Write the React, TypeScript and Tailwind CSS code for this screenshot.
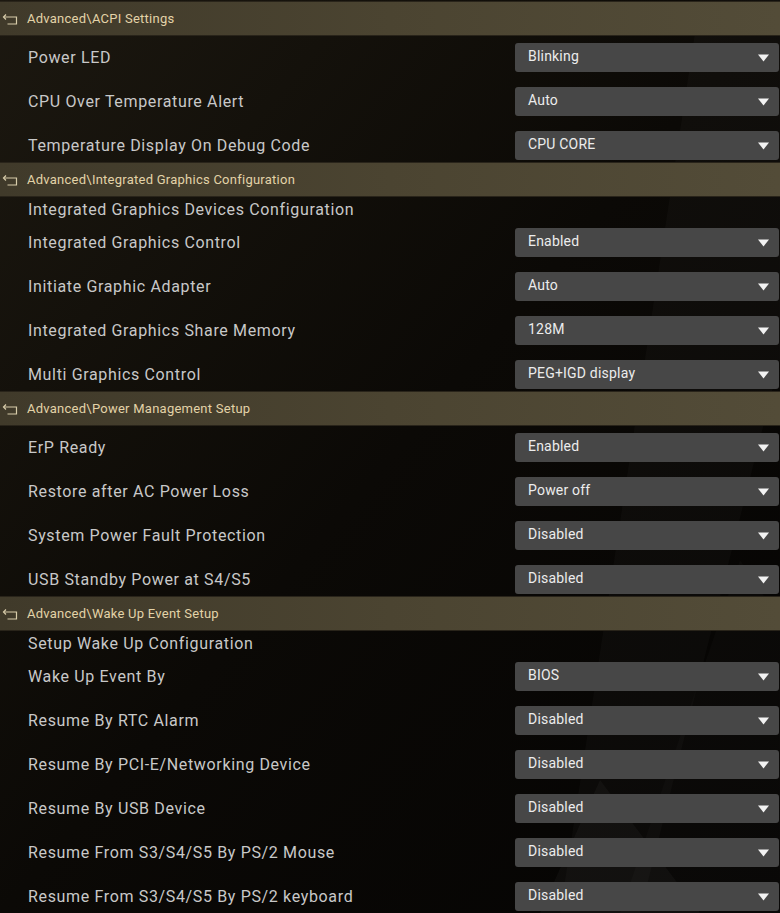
import React from 'react';

type Item = { label: string; value?: string };
type Section = { title: string; items: Item[] };

const sections: Section[] = [
  {
    title: 'Advanced\\ACPI Settings',
    items: [
      { label: 'Power LED', value: 'Blinking' },
      { label: 'CPU Over Temperature Alert', value: 'Auto' },
      { label: 'Temperature Display On Debug Code', value: 'CPU CORE' },
    ],
  },
  {
    title: 'Advanced\\Integrated Graphics Configuration',
    items: [
      { label: 'Integrated Graphics Devices Configuration' },
      { label: 'Integrated Graphics Control', value: 'Enabled' },
      { label: 'Initiate Graphic Adapter', value: 'Auto' },
      { label: 'Integrated Graphics Share Memory', value: '128M' },
      { label: 'Multi Graphics Control', value: 'PEG+IGD display' },
    ],
  },
  {
    title: 'Advanced\\Power Management Setup',
    items: [
      { label: 'ErP Ready', value: 'Enabled' },
      { label: 'Restore after AC Power Loss', value: 'Power off' },
      { label: 'System Power Fault Protection', value: 'Disabled' },
      { label: 'USB Standby Power at S4/S5', value: 'Disabled' },
    ],
  },
  {
    title: 'Advanced\\Wake Up Event Setup',
    items: [
      { label: 'Setup Wake Up Configuration' },
      { label: 'Wake Up Event By', value: 'BIOS' },
      { label: 'Resume By RTC Alarm', value: 'Disabled' },
      { label: 'Resume By PCI-E/Networking Device', value: 'Disabled' },
      { label: 'Resume By USB Device', value: 'Disabled' },
      { label: 'Resume From S3/S4/S5 By PS/2 Mouse', value: 'Disabled' },
      { label: 'Resume From S3/S4/S5 By PS/2 keyboard', value: 'Disabled' },
    ],
  },
];

function BackIcon() {
  return (
    <svg width="18" height="14" viewBox="0 0 18 14" className="shrink-0" fill="none" stroke="#d8ccaa" strokeWidth="1.2">
      <path d="M5 2.5 L2.5 5 L5 7.5" />
      <path d="M2.8 5 H15.5 V12 H6.5" />
    </svg>
  );
}

function Caret() {
  return (
    <svg width="11" height="8" viewBox="0 0 11 8" className="shrink-0">
      <path d="M0 0.5 H11 L5.5 7.5 Z" fill="#f2f2f2" />
    </svg>
  );
}

function SectionHeader({ title }: { title: string }) {
  return (
    <div className="h-[35px] flex items-center gap-[8px] pl-[1px] bg-gradient-to-r from-[#403a2a] via-[#4b4431] to-[#534c38] border-y border-[#29241a]">
      <BackIcon />
      <span className="text-[13px] text-[#e3d3a8] tracking-[0.25px]">{title}</span>
    </div>
  );
}

function Row({ item }: { item: Item }) {
  if (!item.value) {
    return (
      <div className="h-[24px] flex items-center pt-[2px] pl-[28px] text-[16px] text-[#c8c8c8] tracking-[0.65px]">
        {item.label}
      </div>
    );
  }
  return (
    <div className="h-[44px] last:h-[38px] pt-[7px] flex items-start">
      <div className="h-[29px] flex-1 flex items-center pt-[1px] pl-[28px] text-[16px] text-[#c8c8c8] tracking-[0.65px]">
        {item.label}
      </div>
      <div className="w-[264px] h-[29px] mr-[1px] rounded-[3px] bg-[#474747] flex items-center justify-between pl-[13px] pr-[10px]">
        <span className="text-[14px] text-[#ececec] tracking-[0.2px] -mt-[3px]">{item.value}</span>
        <Caret />
      </div>
    </div>
  );
}

export default function App() {
  return (
    <div
      className="relative w-[780px] h-[913px] overflow-hidden bg-gradient-to-br from-[#1c1810] via-[#0b0906] to-[#050403]"
      style={{ fontFamily: 'Roboto, "Noto Sans", sans-serif' }}
    >
      <svg className="absolute inset-0 pointer-events-none" width="780" height="913" viewBox="0 0 780 913">
        <polygon points="700,0 780,0 780,360 640,913 560,913" fill="#ffffff" opacity="0.025" />
        <polygon points="740,560 780,620 780,913 700,913 620,913" fill="#ffffff" opacity="0.02" />
        <polygon points="600,780 700,913 540,913" fill="#ffffff" opacity="0.03" />
      </svg>
      <div className="relative pt-[1px] flex flex-col">
        {sections.map((s) => (
          <div key={s.title} className="flex flex-col">
            <SectionHeader title={s.title} />
            <div className="flex flex-col">
              {s.items.map((it) => (
                <Row key={it.label} item={it} />
              ))}
            </div>
          </div>
        ))}
      </div>
    </div>
  );
}
